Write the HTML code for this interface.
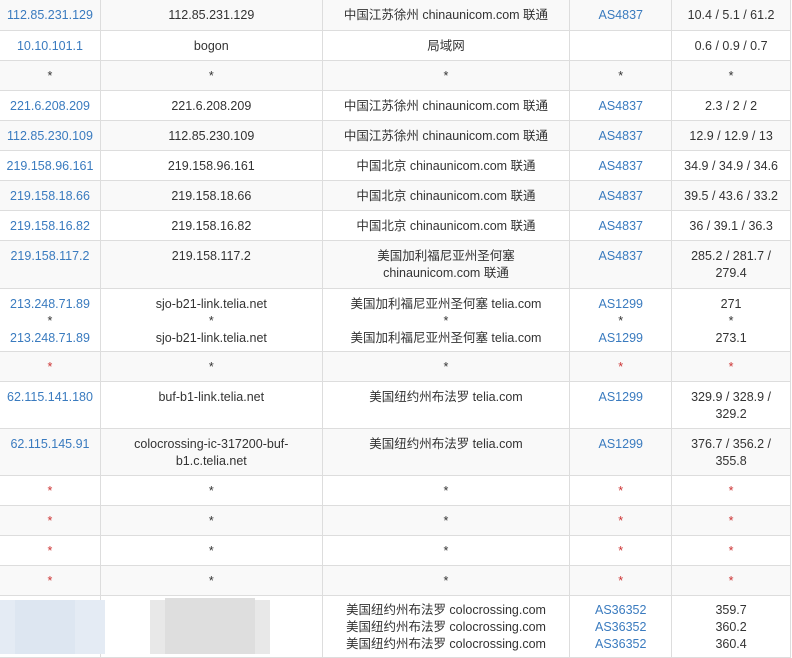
<!DOCTYPE html>
<html><head><meta charset="utf-8"><style>
body{margin:0;background:#fff;width:792px;height:654px;overflow:hidden;position:relative}
table{border-collapse:collapse;table-layout:fixed;position:absolute;left:-1px;top:-1px;font-family:"Liberation Sans","Noto Sans CJK SC",sans-serif;font-size:12.5px;color:#333}
td{border:1px solid #ddd;text-align:center;vertical-align:top;padding:7px 3px 0;line-height:17px;overflow:hidden;box-sizing:border-box}
tr:nth-child(odd) td{background:#f9f9f9}
td:first-child,.b{color:#3a7bbf}
</style></head><body>
<table>
<colgroup><col style="width:101px"><col style="width:222px"><col style="width:248px"><col style="width:102px"><col style="width:119px"></colgroup>
<tr style="height:31px"><td>112.85.231.129</td><td>112.85.231.129</td><td>中国江苏徐州 chinaunicom.com 联通</td><td class="b">AS4837</td><td>10.4 / 5.1 / 61.2</td></tr>
<tr style="height:30px"><td>10.10.101.1</td><td>bogon</td><td>局域网</td><td></td><td>0.6 / 0.9 / 0.7</td></tr>
<tr style="height:30px"><td style="color:#333">*</td><td>*</td><td>*</td><td>*</td><td>*</td></tr>
<tr style="height:30px"><td>221.6.208.209</td><td>221.6.208.209</td><td>中国江苏徐州 chinaunicom.com 联通</td><td class="b">AS4837</td><td>2.3 / 2 / 2</td></tr>
<tr style="height:30px"><td>112.85.230.109</td><td>112.85.230.109</td><td>中国江苏徐州 chinaunicom.com 联通</td><td class="b">AS4837</td><td>12.9 / 12.9 / 13</td></tr>
<tr style="height:30px"><td>219.158.96.161</td><td>219.158.96.161</td><td>中国北京 chinaunicom.com 联通</td><td class="b">AS4837</td><td>34.9 / 34.9 / 34.6</td></tr>
<tr style="height:30px"><td>219.158.18.66</td><td>219.158.18.66</td><td>中国北京 chinaunicom.com 联通</td><td class="b">AS4837</td><td>39.5 / 43.6 / 33.2</td></tr>
<tr style="height:30px"><td>219.158.16.82</td><td>219.158.16.82</td><td>中国北京 chinaunicom.com 联通</td><td class="b">AS4837</td><td>36 / 39.1 / 36.3</td></tr>
<tr style="height:48px"><td>219.158.117.2</td><td>219.158.117.2</td><td>美国加利福尼亚州圣何塞<br>chinaunicom.com 联通</td><td class="b">AS4837</td><td>285.2 / 281.7 /<br>279.4</td></tr>
<tr style="height:63px"><td>213.248.71.89<br><span style="color:#333">*</span><br>213.248.71.89</td><td>sjo-b21-link.telia.net<br>*<br>sjo-b21-link.telia.net</td><td>美国加利福尼亚州圣何塞 telia.com<br>*<br>美国加利福尼亚州圣何塞 telia.com</td><td class="b">AS1299<br><span style="color:#333">*</span><br>AS1299</td><td>271<br>*<br>273.1</td></tr>
<tr style="height:30px"><td style="color:#c33">*</td><td>*</td><td>*</td><td style="color:#c33">*</td><td style="color:#c33">*</td></tr>
<tr style="height:47px"><td>62.115.141.180</td><td>buf-b1-link.telia.net</td><td>美国纽约州布法罗 telia.com</td><td class="b">AS1299</td><td>329.9 / 328.9 /<br>329.2</td></tr>
<tr style="height:47px"><td>62.115.145.91</td><td>colocrossing-ic-317200-buf-<br>b1.c.telia.net</td><td>美国纽约州布法罗 telia.com</td><td class="b">AS1299</td><td>376.7 / 356.2 /<br>355.8</td></tr>
<tr style="height:30px"><td style="color:#c33">*</td><td>*</td><td>*</td><td style="color:#c33">*</td><td style="color:#c33">*</td></tr>
<tr style="height:30px"><td style="color:#c33">*</td><td>*</td><td>*</td><td style="color:#c33">*</td><td style="color:#c33">*</td></tr>
<tr style="height:30px"><td style="color:#c33">*</td><td>*</td><td>*</td><td style="color:#c33">*</td><td style="color:#c33">*</td></tr>
<tr style="height:30px"><td style="color:#c33">*</td><td>*</td><td>*</td><td style="color:#c33">*</td><td style="color:#c33">*</td></tr>
<tr style="height:62px"><td style="padding-top:6px"></td><td></td><td style="padding-top:6px">美国纽约州布法罗 colocrossing.com<br>美国纽约州布法罗 colocrossing.com<br>美国纽约州布法罗 colocrossing.com</td><td class="b" style="padding-top:6px">AS36352<br>AS36352<br>AS36352</td><td style="padding-top:6px">359.7<br>360.2<br>360.4</td></tr>
</table>
<div style="position:absolute;left:0;top:600px;width:105px;height:54px;background:#e4ebf4"></div>
<div style="position:absolute;left:15px;top:600px;width:60px;height:54px;background:#dde6f1"></div>
<div style="position:absolute;left:150px;top:600px;width:120px;height:54px;background:#e8e8e8"></div>
<div style="position:absolute;left:165px;top:598px;width:90px;height:56px;background:#dedede"></div>
</body></html>
